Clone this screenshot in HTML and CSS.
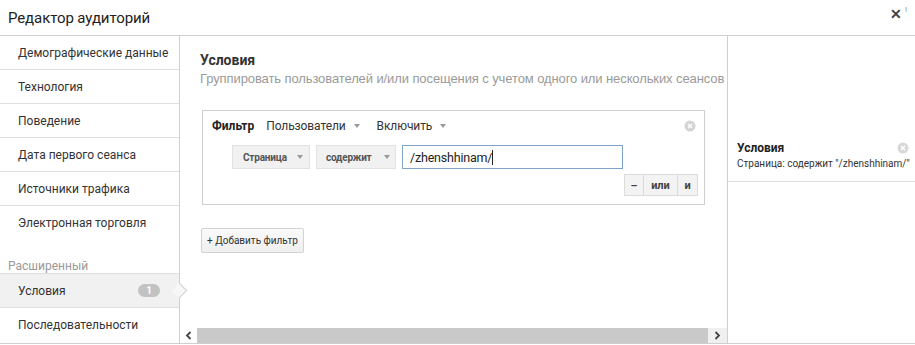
FILE: index.html
```html
<!DOCTYPE html>
<html lang="ru">
<head>
<meta charset="utf-8">
<title>Редактор аудиторий</title>
<link rel="stylesheet" href="styles.css">
</head>
<body>
<div class="dialog">
  <header class="hdr">
    <h1 class="title">Редактор аудиторий</h1>
    <div class="close">✕<span class="mark">!</span></div>
  </header>
  <div class="body">
    <nav class="side">
      <div class="item">Демографические данные</div>
      <div class="item">Технология</div>
      <div class="item">Поведение</div>
      <div class="item">Дата первого сеанса</div>
      <div class="item">Источники трафика</div>
      <div class="item noborder">Электронная торговля</div>
      <div class="section">Расширенный</div>
      <div class="item active">Условия <span class="badge">1</span><span class="pointer"></span></div>
      <div class="item noborder">Последовательности</div>
    </nav>
    <main class="main">
      <div class="content">
        <h2 class="heading">Условия</h2>
        <p class="sub">Группировать пользователей и/или посещения с учетом одного или нескольких сеансов</p>
        <div class="filter">
          <div class="frow">
            <span class="flabel">Фильтр</span>
            <span class="dd">Пользователи <i class="arr"></i></span>
            <span class="dd">Включить <i class="arr"></i></span>
            <svg class="xcirc" width="12" height="12" viewBox="0 0 12 12"><circle cx="6" cy="6" r="5.5" fill="#d4d4d4"/><path d="M4 4L8 8M8 4L4 8" stroke="#fff" stroke-width="1.4"/></svg>
          </div>
          <div class="crow">
            <span class="sel sel1">Страница <i class="arr"></i></span>
            <span class="sel sel2">содержит <i class="arr"></i></span>
            <span class="inp">/zhenshhinam/<span class="caret"></span></span>
          </div>
          <div class="brow">
            <span class="btn b1">–</span><span class="btn b2">или</span><span class="btn b3">и</span>
          </div>
        </div>
        <button class="add">+ Добавить фильтр</button>
      </div>
      <div class="scrollbar">
        <span class="sarrow left"><svg width="7" height="9" viewBox="0 0 7 9"><path d="M5.5 1L2 4.5L5.5 8" fill="none" stroke="#444" stroke-width="1.8"/></svg></span>
        <span class="track"></span>
        <span class="sarrow right"><svg width="7" height="9" viewBox="0 0 7 9"><path d="M1.5 1L5 4.5L1.5 8" fill="none" stroke="#444" stroke-width="1.8"/></svg></span>
      </div>
    </main>
    <aside class="summary">
      <div class="card">
        <div class="ctitle">Условия</div>
        <div class="cdesc">Страница: содержит "/zhenshhinam/"</div>
        <svg class="xcirc cx" width="12" height="12" viewBox="0 0 12 12"><circle cx="6" cy="6" r="5.5" fill="#d8d8d8"/><path d="M4 4L8 8M8 4L4 8" stroke="#fff" stroke-width="1.4"/></svg>
      </div>
    </aside>
  </div>
</div>
</body>
</html>
```

FILE: styles.css
```css
* { box-sizing: border-box; }
html, body { margin: 0; padding: 0; background: #fff; }
body { font-family: Roboto, "Noto Sans", sans-serif; color: #333; width: 915px; height: 345px; overflow: hidden; }

.dialog { width: 915px; }

.hdr {
  height: 36px;
  border-bottom: 1px solid #cfcfcf;
  display: flex;
  align-items: center;
  justify-content: space-between;
  padding: 0 6px 0 8px;
}
.title { margin: 0; font-size: 15px; letter-spacing: -0.1px; font-weight: 400; color: #222; line-height: 20px; }
.close { font-size: 14px; font-weight: 700; color: #444; display: flex; align-items: flex-start; margin-top: -8px; margin-right: 2px; }
.mark { font-size: 8px; color: #888; font-weight: 400; margin-left: 3px; margin-top: -1px; }

.body {
  display: grid;
  grid-template-columns: 180px 548px 1fr;
  height: 308px;
  border-bottom: 1px solid #cfcfcf;
}

.side { border-right: 1px solid #cfcfcf; position: relative; z-index: 2; }
.item {
  height: 34px;
  border-bottom: 1px solid #dedede;
  padding-left: 18px;
  display: flex;
  align-items: center;
  font-size: 12px;
  color: #333;
  position: relative;
  white-space: nowrap;
}
.item.noborder { border-bottom: none; }
.section {
  height: 34px;
  padding: 19px 0 0 8px;
  font-size: 12px;
  color: #999;
  line-height: 14px;
  border-bottom: 1px solid #dedede;
}
.item.active { background: #f1f1f1; }
.badge {
  position: absolute;
  left: 138px;
  top: 10px;
  width: 22px;
  height: 13px;
  border-radius: 7px;
  background: #c2c2c2;
  color: #fff;
  font-size: 10px;
  font-weight: 700;
  text-align: center;
  line-height: 13px;
}
.pointer {
  position: absolute;
  right: -6px;
  top: 11px;
  width: 11px;
  height: 11px;
  background: #f7f7f7;
  border-top: 1px solid #d0d0d0;
  border-right: 1px solid #d0d0d0;
  transform: rotate(45deg);
}

.main { border-right: 1px solid #cfcfcf; display: flex; flex-direction: column; overflow: hidden; }
.content { padding: 15px 0 0 20px; flex: 1; }
.heading { margin: 0; font-size: 14px; font-weight: 700; line-height: 18px; color: #333; }
.sub {
  margin: 1px 0 0 0;
  font-family: "Liberation Sans", Arial, sans-serif;
  font-size: 13px;
  letter-spacing: -0.1px;
  color: #9a9a9a;
  line-height: 18px;
  white-space: nowrap;
}

.filter {
  margin: 22px 0 0 2px;
  width: 503px;
  height: 95px;
  border: 1px solid #cfcfcf;
  padding: 0 6px 0 9px;
  display: flex;
  flex-direction: column;
}
.frow { display: flex; align-items: center; height: 30px; font-size: 12px; }
.flabel { font-weight: 700; color: #222; margin-right: 12px; }
.dd { color: #333; margin-right: 17px; display: inline-flex; align-items: center; letter-spacing: -0.1px; }
.arr {
  display: inline-block;
  width: 0; height: 0;
  border-left: 3.5px solid transparent;
  border-right: 3.5px solid transparent;
  border-top: 4px solid #999;
  margin-left: 8px;
}
.xcirc { margin-left: auto; margin-right: 2px; }

.crow { display: flex; align-items: center; padding-left: 20px; margin-top: 4px; height: 24px; }
.sel {
  height: 24px;
  background: #f1f1f1;
  border: 1px solid #e2e2e2;
  font-size: 10px;
  font-weight: 700;
  color: #555;
  display: inline-flex;
  align-items: center;
  margin-right: 6px;
  letter-spacing: -0.2px;
}
.sel1 { width: 78px; padding-left: 10px; }
.sel1 .arr { margin-left: 10px; }
.sel2 { width: 80px; padding-left: 9px; }
.sel2 .arr { margin-left: 12px; }
.inp {
  width: 221px;
  height: 24px;
  border: 1px solid #7fa3c9;
  font-size: 12.5px;
  letter-spacing: -0.2px;
  color: #222;
  padding-left: 7px;
  display: inline-flex;
  align-items: center;
}
.caret { display: inline-block; width: 1px; height: 15px; background: #222; }

.brow { display: flex; justify-content: flex-end; margin-top: 5px; }
.btn {
  height: 22px;
  border: 1px solid #dcdcdc;
  background: #f3f3f3;
  font-size: 11px;
  font-weight: 700;
  color: #444;
  display: inline-flex;
  align-items: center;
  justify-content: center;
}
.btn + .btn { border-left: none; }
.b1 { width: 20px; }
.b2 { width: 34px; }
.b3 { width: 20px; }

.add {
  margin: 23px 0 0 1px;
  height: 25px;
  padding: 0 5px;
  border: 1px solid #d2d2d2;
  border-radius: 2px;
  background: linear-gradient(#fafafa, #efefef);
  font-family: Roboto, sans-serif;
  font-size: 10px;
  color: #333;
  cursor: pointer;
}

.scrollbar { height: 15px; display: flex; align-items: stretch; }
.sarrow { width: 17px; display: flex; align-items: center; justify-content: center; }
.sarrow.right { width: 19px; background: #f0f0f0; }
.track { flex: 1; background: #c9c9c9; }

.summary { position: relative; }
.card { margin-top: 104px; padding: 0 8px 9px 9px; border-bottom: 1px solid #dedede; position: relative; }
.ctitle { font-size: 12px; font-weight: 700; color: #222; line-height: 16px; }
.cdesc { font-size: 10px; color: #333; line-height: 16px; white-space: nowrap; }
.cx { position: absolute; right: 7px; top: 2px; }
```
